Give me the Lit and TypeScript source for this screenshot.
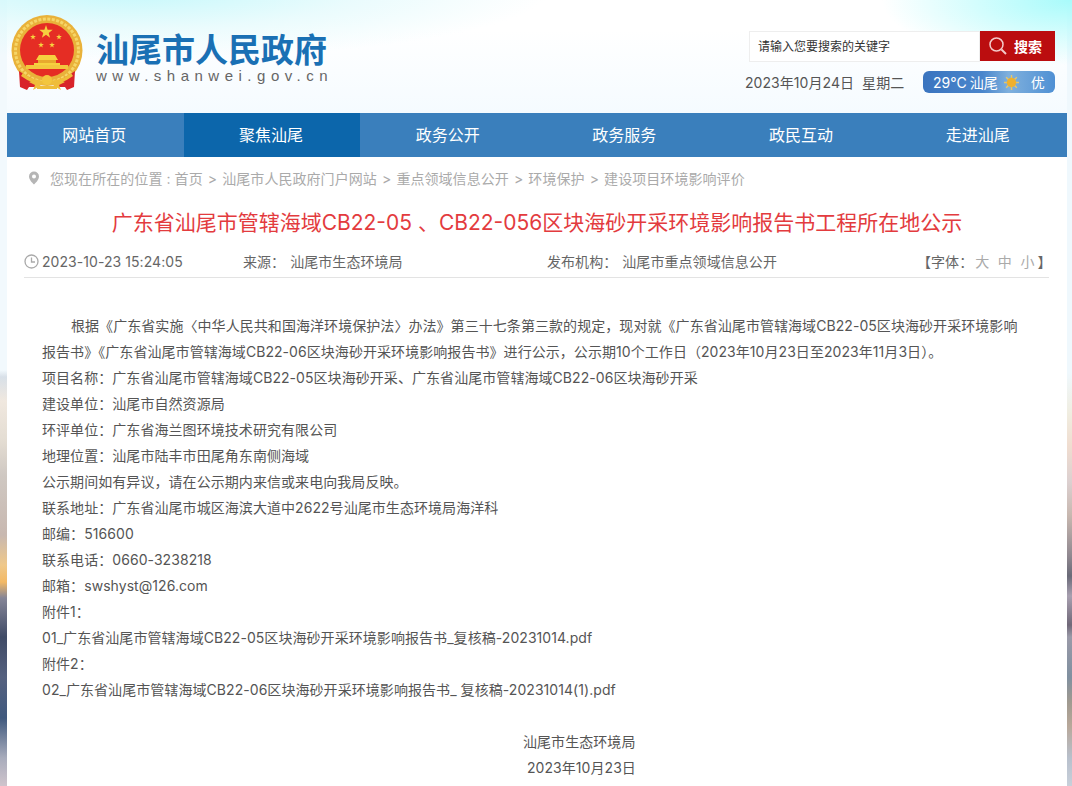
import { LitElement, html, css, svg } from "lit";
import { customElement } from "lit/decorators.js";

const star = (cx: number, cy: number, r: number) => {
  const pts: string[] = [];
  for (let i = 0; i < 10; i++) {
    const rad = i % 2 === 0 ? r : r * 0.4;
    const a = -Math.PI / 2 + (i * Math.PI) / 5;
    pts.push(`${(cx + rad * Math.cos(a)).toFixed(1)},${(cy + rad * Math.sin(a)).toFixed(1)}`);
  }
  return svg`<polygon points=${pts.join(" ")} fill="#f6d13f"/>`;
};

const emblem = html`<svg class="emblem" viewBox="0 0 72 76" width="72" height="76">
  <circle cx="36" cy="35.500" r="35.500" fill="#e9b23a"/>
  <circle cx="36" cy="35.500" r="31.500" fill="none" stroke="#f6d668" stroke-width="3" stroke-dasharray="3 1.500"/>
  <circle cx="36" cy="35" r="27" fill="#e52d24"/>
  ${star(35, 17, 7)}${star(22, 22, 3)}${star(48, 22, 3)}${star(30, 30, 3)}${star(41, 30, 3)}
  <path d="M25 45 L28 40 H44 L47 45Z" fill="#f6d13f"/>
  <rect x="27" y="45" width="18" height="3" fill="#e8a92e"/>
  <rect x="23" y="48" width="26" height="2" fill="#f6d13f"/>
  <rect x="15" y="50" width="42" height="4" fill="#f3c63e"/>
  <path d="M8 56 L14 60 Q22 64 28 68 L24 72 L18 72 L16 75 L9 72Z" fill="#d8232a"/>
  <path d="M64 56 L58 60 Q50 64 44 68 L48 72 L54 72 L56 75 L63 72Z" fill="#d8232a"/>
  <path d="M12 58 Q22 66 36 66 Q50 66 60 58 L62 61 Q50 70 36 70 Q22 70 10 61Z" fill="#efbd3a"/>
  <path d="M18 67 Q26 63 32 67 L29 71 L22 75 L24 70Z" fill="#efbd3a"/>
  <path d="M54 67 Q46 63 40 67 L43 71 L50 75 L48 70Z" fill="#efbd3a"/>
  <circle cx="36" cy="65" r="5" fill="#f3c63e"/>
  <rect x="26" y="71" width="20" height="3" fill="#efbd3a"/>
</svg>`;

const NAV = ["网站首页", "聚焦汕尾", "政务公开", "政务服务", "政民互动", "走进汕尾"];
const CRUMBS = ["您现在所在的位置 : 首页", "汕尾市人民政府门户网站", "重点领域信息公开", "环境保护", "建设项目环境影响评价"];

const LINES = [
  "项目名称：广东省汕尾市管辖海域CB22-05区块海砂开采、广东省汕尾市管辖海域CB22-06区块海砂开采",
  "建设单位：汕尾市自然资源局",
  "环评单位：广东省海兰图环境技术研究有限公司",
  "地理位置：汕尾市陆丰市田尾角东南侧海域",
  "公示期间如有异议，请在公示期内来信或来电向我局反映。",
  "联系地址：广东省汕尾市城区海滨大道中2622号汕尾市生态环境局海洋科",
  "邮编：516600",
  "联系电话：0660-3238218",
  "邮箱：swshyst@126.com",
  "附件1：",
  "01_广东省汕尾市管辖海域CB22-05区块海砂开采环境影响报告书_复核稿-20231014.pdf",
  "附件2：",
  "02_广东省汕尾市管辖海域CB22-06区块海砂开采环境影响报告书_ 复核稿-20231014(1).pdf",
];

@customElement("app-root")
export class AppRoot extends LitElement {
  static styles = css`
    :host {
      display: block;
      height: 786px;
      overflow: hidden;
      font-family: Inter, "Noto Sans CJK SC", sans-serif;
      color: #555;
      font-size: 14px;
      background:
        radial-gradient(ellipse 190px 65px at 1072px 0, #a8fbfb 0%, rgba(190, 252, 252, 0.75) 45%, rgba(255, 255, 255, 0) 100%),
        radial-gradient(ellipse 420px 70px at 130px -10px, #c4f8fb 0%, rgba(225, 250, 252, 0.7) 55%, rgba(255, 255, 255, 0) 100%),
        linear-gradient(180deg, #f2f9fd 0, #f2f9fd 370px, #d8e0e8 377px, #f0e8df 401px, #e4ddd3 440px, #cfc8c2 475px, #c8b8b0 535px, #efc88a 565px, #f3b965 582px, #858597 598px, #404b66 637px, #55617f 677px, #40597e 718px, #a8acbc 758px, #cfc4cc 786px) left top / 7px 786px no-repeat,
        linear-gradient(180deg, #eff8fd 0, #eff8fd 373px, #f0ede0 414px, #f0ddd0 446px, #dcd0d0 482px, #c8b8b0 515px, #908890 556px, #6a6a78 576px, #a8a0b0 596px, #706878 625px, #9a9aa8 637px, #8090a0 677px, #a09a90 702px, #b8a89a 726px, #b8c0cc 758px, #c8d0da 786px) right top / 5px 786px no-repeat,
        linear-gradient(180deg, #fff 0, #fff 30px, #f5fbff 113px);
    }
    .header {
      height: 113px;
      padding: 0 17px 0 11px;
      box-sizing: border-box;
      display: flex;
      justify-content: space-between;
    }
    .logo {
      display: flex;
      align-items: flex-start;
      gap: 13px;
      padding-top: 15px;
    }
    .emblem {
      display: block;
    }
    .brand {
      padding-top: 14px;
      display: flex;
      flex-direction: column;
    }
    .brand-cn {
      font-family: "Noto Sans CJK SC", sans-serif;
      font-size: 33px;
      font-weight: 700;
      line-height: 38px;
      color: #1a70b4;
      white-space: nowrap;
    }
    .brand-en {
      font-family: "Liberation Sans", sans-serif;
      font-size: 15px;
      letter-spacing: 5.5px;
      line-height: 17px;
      color: #666;
      white-space: nowrap;
    }
    .tools {
      width: 310px;
      padding-top: 31px;
      display: flex;
      flex-direction: column;
      align-items: flex-end;
    }
    .search {
      display: flex;
      align-items: flex-start;
    }
    .input {
      width: 231px;
      height: 31px;
      box-sizing: border-box;
      border: 1px solid #eee;
      background: #fff;
      padding-left: 8px;
      font-size: 12px;
      line-height: 29px;
      color: #333;
    }
    .btn {
      width: 75px;
      height: 30px;
      padding-right: 4px;
      box-sizing: border-box;
      background: #bb0d0f;
      color: #fff;
      display: flex;
      align-items: center;
      justify-content: center;
      gap: 7px;
      font-size: 14px;
      font-weight: 700;
    }
    .status {
      margin-top: 9px;
      width: 310px;
      display: flex;
      align-items: center;
      justify-content: space-between;
    }
    .today {
      white-space: pre;
      color: #555;
      letter-spacing: 0.06px;
    }
    .weather {
      width: 132px;
      height: 22px;
      border-radius: 6px;
      background: linear-gradient(90deg, #3a74bf 0%, #4a86cc 45%, #7fb0dd 65%, #4f90d4 100%);
      color: #fff;
      display: flex;
      align-items: center;
      padding: 0 0 0 10px;
      box-sizing: border-box;
      white-space: nowrap;
    }
    .w-place {
      margin-left: 3px;
    }
    .w-sun {
      margin-left: 6px;
      flex: none;
    }
    .w-aq {
      margin-left: 12px;
    }
    .page {
      margin: 0 5px 0 7px;
      height: 673px;
      background: #fff;
    }
    .nav {
      height: 44px;
      display: grid;
      grid-template-columns: repeat(6, 1fr);
      background: #3a7fbc;
    }
    .nav div {
      color: #fff;
      font-size: 16px;
      line-height: 44px;
      text-align: center;
      padding-right: 2px;
    }
    .nav .on {
      background: #0c66ab;
    }
    .crumb {
      height: 42px;
      padding-left: 21px;
      display: flex;
      align-items: center;
      color: #aaa;
      font-size: 14px;
      white-space: pre;
      letter-spacing: 0.06px;
    }
    .crumb svg {
      margin-right: 10px;
    }
    .sep {
      width: 19.5px;
      text-align: center;
    }
    h1 {
      margin: 7px 0 0;
      font-weight: 400;
      font-size: 21px;
      line-height: 34px;
      color: #e33b3e;
      text-align: center;
      white-space: nowrap;
    }
    .meta {
      margin: 7px 18px 0 17px;
      height: 31px;
      padding-bottom: 2px;
      box-sizing: border-box;
      border-bottom: 1px solid #e3e3e3;
      display: flex;
      align-items: center;
      white-space: pre;
      color: #666;
      letter-spacing: 0.06px;
    }
    .meta > span {
      flex: none;
    }
    .clock {
      margin-right: 3px;
      flex: none;
    }
    .m-date { width: 201px; }
    .m-src { width: 304px; }
    .m-pub { width: 370px; }
    .m-val { margin-left: 5px; }
    .m-font i {
      font-style: normal;
      color: #aaa;
      margin-left: 2px;
      margin-right: 6.5px;
    }
    .m-font i:last-of-type {
      margin-right: 3px;
    }
    .body {
      padding: 35px 40px 0 35px;
      line-height: 26px;
      color: #555;
      letter-spacing: 0.06px;
    }
    .body p {
      margin: 0;
      white-space: nowrap;
    }
    .body .lead {
      text-indent: 29px;
      white-space: normal;
    }
    .gap {
      height: 26px;
    }
    .sign1 { padding-left: 481px; }
    .sign2 { padding-left: 485px; }
  `;

  render() {
    return html`
      <div class="header">
        <div class="logo">
          ${emblem}
          <div class="brand">
            <div class="brand-cn">汕尾市人民政府</div>
            <div class="brand-en">www.shanwei.gov.cn</div>
          </div>
        </div>
        <div class="tools">
          <div class="search">
            <div class="input">请输入您要搜索的关键字</div>
            <div class="btn">
              <svg width="18" height="18" viewBox="0 0 18 18" fill="none" stroke="#f3c9c9" stroke-width="1.500">
                <circle cx="7.500" cy="7.500" r="6.500"/>
                <path d="M12.500 12.500 L17 17" stroke-width="2"/>
              </svg>
              <span>搜索</span>
            </div>
          </div>
          <div class="status">
            <span class="today">2023年10月24日  星期二</span>
            <div class="weather">
              <span>29°C</span>
              <span class="w-place">汕尾</span>
              <svg class="w-sun" width="15" height="15" viewBox="0 0 16 16">
                <g stroke="#e6c76a" stroke-width="1.500">
                  <path d="M8 0V16M0 8H16M2.300 2.300L13.700 13.700M13.700 2.300L2.300 13.700"/>
                </g>
                <circle cx="8" cy="8" r="5" fill="#efb02c"/>
              </svg>
              <span class="w-aq">优</span>
            </div>
          </div>
        </div>
      </div>
      <div class="page">
        <div class="nav">
          ${NAV.map((n, i) => html`<div class=${i === 1 ? "on" : ""}>${n}</div>`)}
        </div>
        <div class="crumb">
          <svg width="12" height="14" viewBox="0 0 12 14">
            <path fill-rule="evenodd" fill="#b5b5b5" d="M6 0.500a5 5 0 0 1 5 5c0 3-3 6-5 8-2-2-5-5-5-8a5 5 0 0 1 5-5zM6 3.500a2 2 0 1 0 0 4a2 2 0 0 0 0-4z"/>
          </svg>
          ${CRUMBS.map((c, i) => html`${i > 0 ? html`<span class="sep">&gt;</span>` : ""}<span>${c}</span>`)}
        </div>
        <h1>广东省汕尾市管辖海域CB22-05 、CB22-056区块海砂开采环境影响报告书工程所在地公示</h1>
        <div class="meta">
          <svg class="clock" width="15" height="15" viewBox="0 0 15 15" fill="none" stroke="#aaa" stroke-width="1.300">
            <circle cx="7.500" cy="7.500" r="6.500"/>
            <path d="M7.500 3.500V8H11"/>
          </svg>
          <span class="m-date">2023-10-23 15:24:05</span>
          <span class="m-src">来源：<span class="m-val">汕尾市生态环境局</span></span>
          <span class="m-pub">发布机构：<span class="m-val">汕尾市重点领域信息公开</span></span>
          <span class="m-font">【字体：<i>大</i><i>中</i><i>小</i>】</span>
        </div>
        <div class="body">
          <p class="lead">根据《广东省实施〈中华人民共和国海洋环境保护法〉办法》第三十七条第三款的规定，现对就《广东省汕尾市管辖海域CB22-05区块海砂开采环境影响报告书》《广东省汕尾市管辖海域CB22-06区块海砂开采环境影响报告书》进行公示，公示期10个工作日（2023年10月23日至2023年11月3日）。</p>
          ${LINES.map((l) => html`<p>${l}</p>`)}
          <div class="gap"></div>
          <p class="sign1">汕尾市生态环境局</p>
          <p class="sign2">2023年10月23日</p>
        </div>
      </div>
    `;
  }
}
